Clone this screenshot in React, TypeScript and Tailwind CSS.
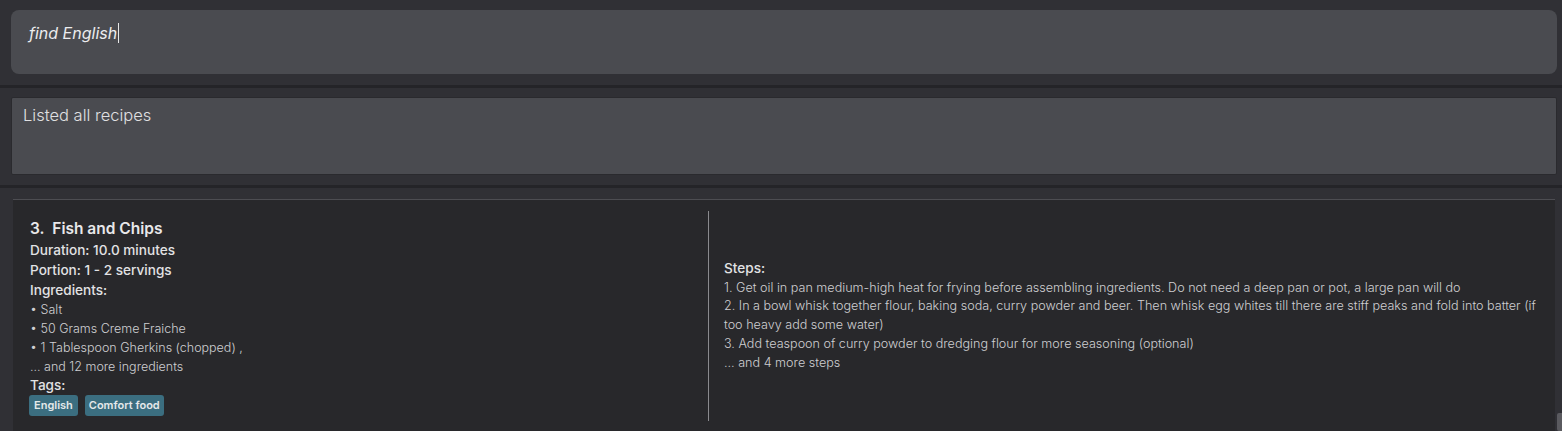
import React from "react";

const font = { fontFamily: "Inter, 'Noto Sans', sans-serif" };

export default function App() {
  return (
    <div
      className="w-[1562px] h-[431px] overflow-hidden bg-[#303035] flex flex-col text-[#e4e4e6]"
      style={font}
    >
      <div className="pt-[10px] pr-[5px] pl-[11px]">
        <div className="h-[64px] rounded-lg bg-[#4a4b50] pl-[18px] pt-[10px]">
          <span className="italic text-[16px] text-[#ececee] border-r border-[#e8e8e8] pr-[1px] leading-[26px]">
            find English
          </span>
        </div>
      </div>
      <div className="mt-[11px] h-[3px] bg-[#242428]" />
      <div className="pt-[9px] pl-[11px] pr-[5px]">
        <div className="h-[78px] bg-[#4a4b50] border border-[#2a2a2e] rounded-[2px] pl-[11px] pt-[4px]">
          <span className="text-[16.5px] font-light text-[#e0e0e2] leading-[26px]">Listed all recipes</span>
        </div>
      </div>
      <div className="mt-[10px] h-[3px] bg-[#242428]" />
      <div className="flex flex-1 pt-[11px] pl-[13px]">
        <div className="flex-1 bg-[#28282b] border-t border-[#4d4d52] flex items-center pt-[11px] pb-[10px]">
          <div className="w-[695px] h-full flex flex-col justify-center pl-[17px] text-[13.6px] leading-[20px]">
            <div className="text-[15.5px] font-semibold leading-[23px] text-[#e8e8ea]">
              3.&nbsp;&nbsp;Fish and Chips
            </div>
            <div className="font-medium text-[#e2e2e4]">Duration: 10.0 minutes</div>
            <div className="font-medium text-[#e2e2e4]">Portion: 1 - 2 servings</div>
            <div className="font-medium text-[#e2e2e4]">Ingredients:</div>
            <div className="font-light text-[#cfcfd2] text-[12.5px] leading-[19px]">• Salt</div>
            <div className="font-light text-[#cfcfd2] text-[12.5px] leading-[19px]">• 50 Grams Creme Fraiche</div>
            <div className="font-light text-[#cfcfd2] text-[12.5px] leading-[19px]">• 1 Tablespoon Gherkins (chopped) ,</div>
            <div className="font-light text-[#cfcfd2] text-[12.5px] leading-[19px]">... and 12 more ingredients</div>
            <div className="font-medium text-[#e2e2e4] leading-[19px]">Tags:</div>
            <div className="flex gap-[7px] -ml-[1px]">
              <span className="bg-[#3b6e80] rounded-[3px] px-[5px] h-[21px] flex items-center text-[11px] font-semibold text-[#e4e8ea]">
                English
              </span>
              <span className="bg-[#3b6e80] rounded-[3px] px-[4px] h-[21px] flex items-center text-[11px] font-semibold text-[#e4e8ea]">
                Comfort food
              </span>
            </div>
          </div>
          <div className="w-px self-stretch bg-[#8a8a8e]" />
          <div className="flex-1 pl-[15px] pr-[4px] text-[12.6px] leading-[19px] font-light text-[#cfcfd2]">
            <div className="font-medium text-[13.6px] text-[#e2e2e4]">Steps:</div>
            <div>1. Get oil in pan medium-high heat for frying before assembling ingredients. Do not need a deep pan or pot, a large pan will do</div>
            <div className="leading-[18.5px]">
              2. In a bowl whisk together flour, baking soda, curry powder and beer. Then whisk egg whites till there are stiff peaks and fold into batter (if too heavy add some water)
            </div>
            <div>3. Add teaspoon of curry powder to dredging flour for more seasoning (optional)</div>
            <div className="leading-[20px]">... and 4 more steps</div>
          </div>
        </div>
        <div className="w-[7px] relative">
          <div className="absolute left-[2px] right-0 top-[214px] bottom-0 bg-[#5a5a5f] rounded-l-[2px]" />
        </div>
      </div>
    </div>
  );
}
